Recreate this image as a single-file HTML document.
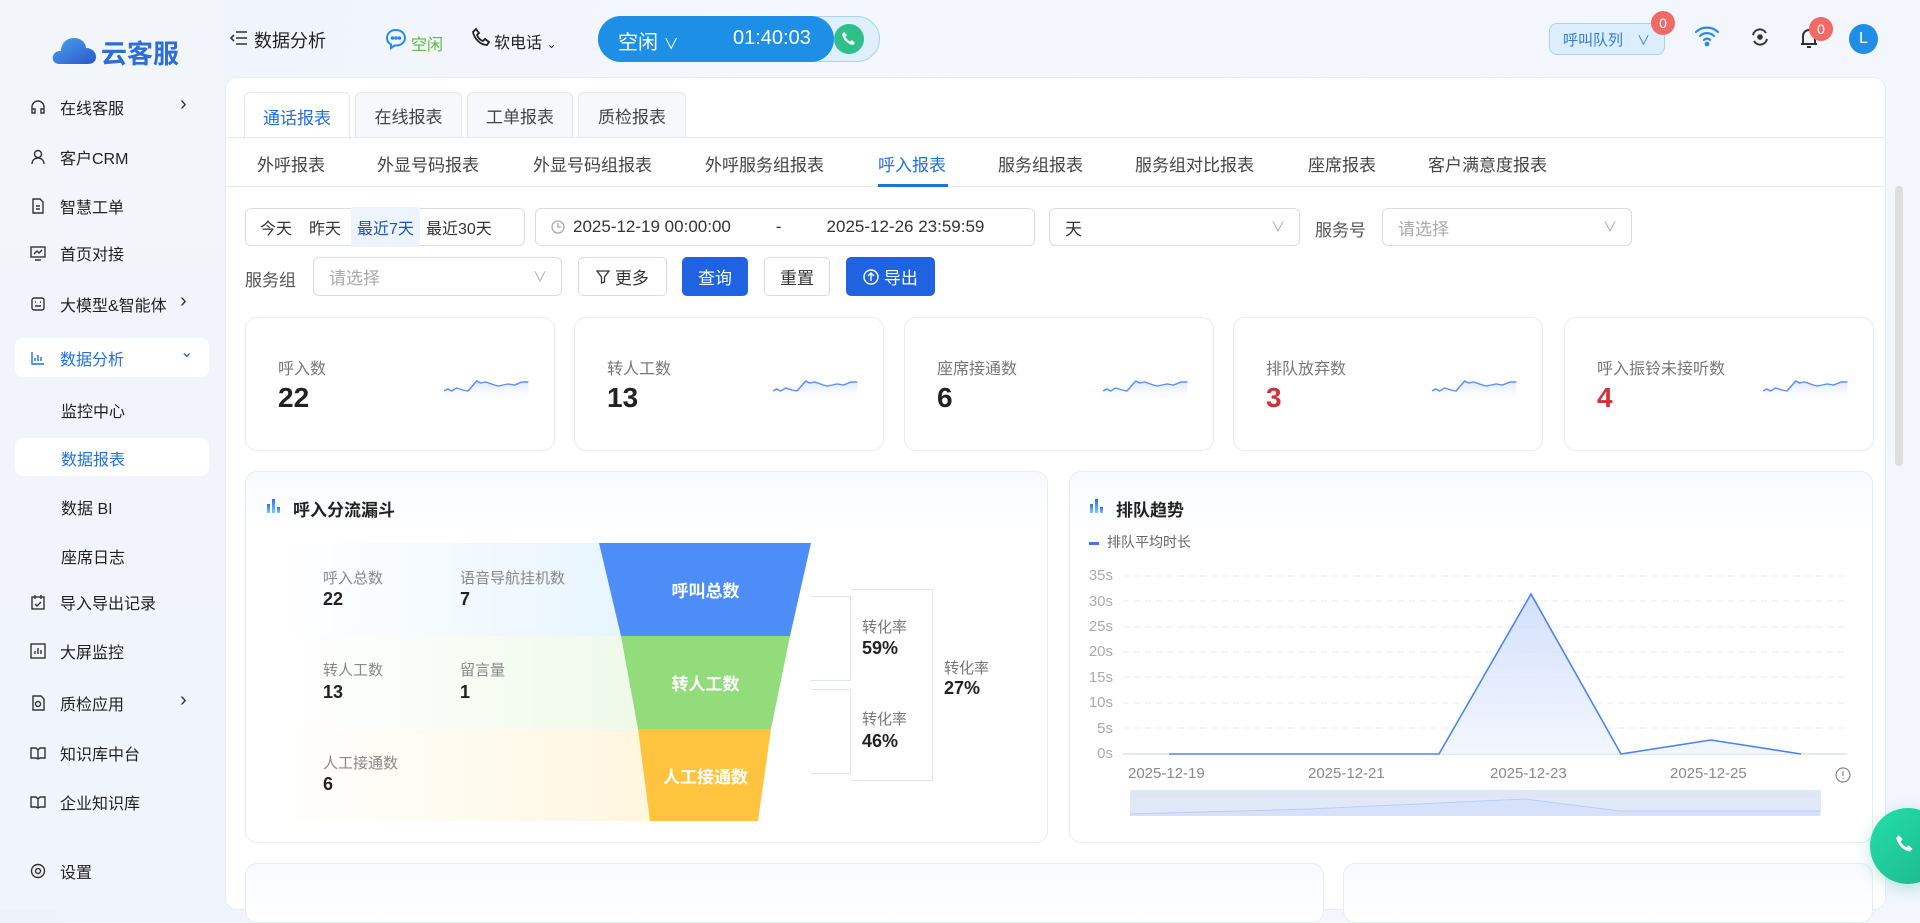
<!DOCTYPE html>
<html><head><meta charset="utf-8"><style>
*{box-sizing:border-box;margin:0;padding:0}
body{width:1920px;height:910px;overflow:hidden;position:relative;font-family:"Liberation Sans","Noto Sans CJK SC",sans-serif;color:#333;background:linear-gradient(90deg,#eef3fb 0%,#f4f7fd 40%,#f3f6fd 100%)}
.a{position:absolute}
.side{left:0;top:0;width:224px;height:910px;background:linear-gradient(180deg,#f2f6fb,#f0f4fb)}
.mi{position:absolute;left:30px;font-size:16px;color:#222;display:flex;align-items:center;height:24px}
.mi svg{width:16px;height:16px;margin-right:14px}
.mi .ar{position:absolute;left:150px;font-size:20px;color:#333;top:-2px}
.sub{position:absolute;left:61px;font-size:16px;color:#222}
.card{background:#fff;border:1px solid #e8ecf3;border-radius:12px}
.tab{position:absolute;top:92px;height:46px;border:1px solid #e6e9ef;border-bottom:none;border-radius:6px 6px 0 0;background:#f6f8fb;font-size:17px;color:#444;display:flex;align-items:center;justify-content:center}
.st{position:absolute;top:151px;font-size:17px;color:#444}
.inp{position:absolute;border:1px solid #d8dce5;border-radius:6px;background:#fff;font-size:17px;color:#333;display:flex;align-items:center}
.btn{position:absolute;top:257px;height:39px;border-radius:5px;font-size:17px;display:flex;align-items:center;justify-content:center}
.sc{position:absolute;top:317px;height:134px;width:310px}
.sc .l{position:absolute;left:32px;top:37px;font-size:16px;color:#777}
.sc .n{position:absolute;left:32px;top:64px;font-size:28px;font-weight:bold;color:#222}
.sc svg{position:absolute;left:198px;top:56px}
.fl{position:absolute;font-size:15px;color:#888}
.fn{position:absolute;font-size:18px;font-weight:bold;color:#222}
.yl{position:absolute;left:1081px;width:32px;text-align:right;font-size:15px;color:#aaa}
.xl{position:absolute;top:765px;font-size:15px;color:#888}
</style></head><body>

<div class="a side"></div>
<svg class="a" style="left:51px;top:33px" width="46" height="32" viewBox="0 0 46 32"><defs><linearGradient id="lg" x1="0" y1="0" x2="1" y2="1"><stop offset="0" stop-color="#4aa3f0"/><stop offset="1" stop-color="#2a56c8"/></linearGradient></defs><path d="M9 31 C2 31 0 25 3 21 C5 18 8 18 10 18 C10 10 16 5 23 5 C30 5 35 10 35 15 C41 15 45 19 45 24 C45 29 41 31 37 31 Z" fill="url(#lg)"/></svg>
<div class="a" style="left:101px;top:34px;font-size:26px;font-weight:bold;color:#2d6fd6">云客服</div>

<div class="mi" style="top:95px"><svg viewBox="0 0 16 16" fill="none" stroke="#333" stroke-width="1.4"><path d="M2 10V8a6 6 0 0112 0v2M2 10h3v4H2zM11 10h3v4h-3z"/></svg>在线客服<span class="ar">›</span></div>
<div class="mi" style="top:145px"><svg viewBox="0 0 16 16" fill="none" stroke="#333" stroke-width="1.4"><circle cx="8" cy="5" r="3.5"/><path d="M2 15c0-4 3-6 6-6s6 2 6 6"/></svg>客户CRM</div>
<div class="mi" style="top:194px"><svg viewBox="0 0 16 16" fill="none" stroke="#333" stroke-width="1.4"><path d="M3 1h7l3 3v11H3z M6 8h4M6 11h4"/></svg>智慧工单</div>
<div class="mi" style="top:241px"><svg viewBox="0 0 16 16" fill="none" stroke="#333" stroke-width="1.4"><rect x="1" y="2" width="14" height="10"/><path d="M4 9l3-3 2 2 3-3M5 15h6"/></svg>首页对接</div>
<div class="mi" style="top:292px"><svg viewBox="0 0 16 16" fill="none" stroke="#333" stroke-width="1.4"><rect x="2" y="2" width="12" height="12" rx="2"/><path d="M5 6h1M10 6h1M5 10h6"/></svg>大模型&amp;智能体<span class="ar">›</span></div>
<div class="a" style="left:15px;top:338px;width:194px;height:39px;background:#fff;border-radius:8px"></div>
<div class="mi" style="top:346px;color:#1f6fe5"><svg viewBox="0 0 16 16" fill="none" stroke="#1f6fe5" stroke-width="1.4"><path d="M2 2v12h12M5 11V8M8 11V5M11 11V7"/></svg>数据分析<span class="ar" style="color:#1f6fe5;font-size:16px;top:-4px">⌄</span></div>
<div class="sub" style="top:398px">监控中心</div>
<div class="a" style="left:15px;top:438px;width:194px;height:38px;background:#fff;border-radius:8px"></div>
<div class="sub" style="top:446px;color:#1f6fe5">数据报表</div>
<div class="sub" style="top:495px">数据 BI</div>
<div class="sub" style="top:544px">座席日志</div>
<div class="mi" style="top:590px"><svg viewBox="0 0 16 16" fill="none" stroke="#333" stroke-width="1.4"><rect x="2" y="3" width="12" height="12"/><path d="M5 1v4M11 1v4M5 10l2 2 4-4"/></svg>导入导出记录</div>
<div class="mi" style="top:639px"><svg viewBox="0 0 16 16" fill="none" stroke="#333" stroke-width="1.4"><rect x="1" y="1" width="14" height="14"/><path d="M5 11V8M8 11V5M11 11V7"/></svg>大屏监控</div>
<div class="mi" style="top:691px"><svg viewBox="0 0 16 16" fill="none" stroke="#333" stroke-width="1.4"><path d="M3 1h8l3 3v11H3z"/><circle cx="8" cy="9" r="2.5"/></svg>质检应用<span class="ar">›</span></div>
<div class="mi" style="top:741px"><svg viewBox="0 0 16 16" fill="none" stroke="#333" stroke-width="1.4"><path d="M1 3h5l2 2 2-2h5v10h-5l-2 1-2-1H1z M8 5v9"/></svg>知识库中台</div>
<div class="mi" style="top:790px"><svg viewBox="0 0 16 16" fill="none" stroke="#333" stroke-width="1.4"><path d="M1 3h5l2 2 2-2h5v10h-5l-2 1-2-1H1z M8 5v9"/></svg>企业知识库</div>
<div class="mi" style="top:859px"><svg viewBox="0 0 16 16" fill="none" stroke="#333" stroke-width="1.4"><circle cx="8" cy="8" r="6.5"/><circle cx="8" cy="8" r="2.5"/></svg>设置</div>

<svg class="a" style="left:230px;top:30px" width="18" height="16" viewBox="0 0 18 16" fill="none" stroke="#333" stroke-width="1.6"><path d="M6 2h11M6 8h11M6 14h11M4 5L1 8l3 3"/></svg>
<div class="a" style="left:254px;top:27px;font-size:18px;color:#222">数据分析</div>
<svg class="a" style="left:384px;top:27px" width="24" height="24" viewBox="0 0 24 24" fill="none" stroke="#2b8ae8" stroke-width="2"><path d="M12 3C6.5 3 3 6.5 3 11c0 3 1.5 5 4 6.5V21l3.5-2.5H12c5.5 0 9-3.5 9-7.5S17.5 3 12 3z"/><circle cx="8.5" cy="11" r="0.8" fill="#2b8ae8"/><circle cx="12" cy="11" r="0.8" fill="#2b8ae8"/><circle cx="15.5" cy="11" r="0.8" fill="#2b8ae8"/></svg>
<div class="a" style="left:411px;top:31px;font-size:16px;color:#5cbc3c">空闲</div>
<svg class="a" style="left:472px;top:27px" width="18" height="20" viewBox="0 0 18 20" fill="none" stroke="#222" stroke-width="1.8"><path d="M4 2l3 4-2 2c1 3 3 5 6 6l2-2 4 3-2 3C8 18 2 11 1 5z"/></svg>
<div class="a" style="left:494px;top:29px;font-size:16px;color:#222">软电话 <span style="font-size:12px">⌄</span></div>
<div class="a" style="left:598px;top:16px;width:282px;height:46px;border-radius:23px;background:#dff0fc;border:1px solid #a9d3f5"></div>
<div class="a" style="left:598px;top:16px;width:236px;height:46px;border-radius:23px;background:#1e8fe6"></div>
<div class="a" style="left:618px;top:26px;font-size:20px;color:#fff">空闲 <span style="font-size:15px">∨</span></div>
<div class="a" style="left:733px;top:27px;font-size:20px;color:#fff">01:40:03</div>
<div class="a" style="left:834px;top:24px;width:30px;height:30px;border-radius:50%;background:#2ec08a"></div>
<svg class="a" style="left:841px;top:31px" width="16" height="16" viewBox="0 0 16 16"><path d="M3 1l3 3-1.5 2c1 2 2.5 3.5 4.5 4.5L11 9l3 3-2 2C6 13 2 8 1 3z" fill="#fff"/></svg>

<div class="a" style="left:1549px;top:23px;width:116px;height:32px;border-radius:8px;background:#dceefd;border:1px solid #a9d0f3;font-size:15px;color:#2e7fd6;display:flex;align-items:center;padding-left:13px">呼叫队列 <span style="margin-left:14px;font-size:13px">∨</span></div>
<div class="a" style="left:1651px;top:11px;width:24px;height:24px;border-radius:50%;background:#f06a66;color:#fff;font-size:14px;text-align:center;line-height:24px">0</div>
<svg class="a" style="left:1694px;top:25px" width="26" height="22" viewBox="0 0 26 22" fill="none" stroke="#2b8ae8" stroke-width="2.2" stroke-linecap="round"><path d="M2 7a16 16 0 0122 0M6 11a10 10 0 0114 0M10 15a4 4 0 016 0"/><circle cx="13" cy="19" r="1.3" fill="#2b8ae8"/></svg>
<svg class="a" style="left:1750px;top:27px" width="20" height="20" viewBox="0 0 20 20" fill="none" stroke="#333" stroke-width="2"><path d="M3 8a7 7 0 0113-2M17 12a7 7 0 01-13 2"/><circle cx="10" cy="10" r="1.8" fill="#333"/></svg>
<svg class="a" style="left:1799px;top:26px" width="20" height="24" viewBox="0 0 20 24" fill="none" stroke="#333" stroke-width="2"><path d="M4 18V10a6 6 0 0112 0v8H2h16M8 21h4"/></svg>
<div class="a" style="left:1809px;top:17px;width:24px;height:24px;border-radius:50%;background:#f06a66;color:#fff;font-size:14px;text-align:center;line-height:24px">0</div>
<div class="a" style="left:1849px;top:24px;width:29px;height:30px;border-radius:50%;background:#1e8fe6;color:#fff;font-size:16px;text-align:center;line-height:30px">L</div>

<div class="a" style="left:225px;top:77px;width:1661px;height:833px;background:#fff;border-radius:12px;border:1px solid #e8edf5"></div>
<div class="tab" style="left:244px;width:106px;background:#fff;color:#1f6fe5;height:47px">通话报表</div>
<div class="tab" style="left:355px;width:107px">在线报表</div>
<div class="tab" style="left:467px;width:106px">工单报表</div>
<div class="tab" style="left:578px;width:108px">质检报表</div>
<div class="a" style="left:226px;top:137px;width:1659px;height:1px;background:#e8ebf0"></div>
<div class="a" style="left:226px;top:186px;width:1659px;height:1px;background:#e6e9ee"></div>
<div class="st" style="left:257px">外呼报表</div>
<div class="st" style="left:377px">外显号码报表</div>
<div class="st" style="left:533px">外显号码组报表</div>
<div class="st" style="left:705px">外呼服务组报表</div>
<div class="st" style="left:878px;color:#1f6fe5">呼入报表</div>
<div class="a" style="left:878px;top:184px;width:70px;height:3px;background:#1f6fe5"></div>
<div class="st" style="left:998px">服务组报表</div>
<div class="st" style="left:1135px">服务组对比报表</div>
<div class="st" style="left:1308px">座席报表</div>
<div class="st" style="left:1428px">客户满意度报表</div>
<div class="a" style="left:1895px;top:186px;width:8px;height:280px;background:#dedede;border-radius:4px"></div>

<div class="inp" style="left:245px;top:208px;width:280px;height:38px;font-size:16px">
 <span style="margin-left:14px">今天</span><span style="margin-left:17px">昨天</span><span style="margin-left:10px;background:#eef4fd;color:#1f4fc0;padding:8px 6px">最近7天</span><span style="margin-left:6px">最近30天</span></div>
<div class="inp" style="left:535px;top:208px;width:500px;height:38px"><svg style="margin-left:15px" width="14" height="14" viewBox="0 0 14 14" fill="none" stroke="#aaa" stroke-width="1.3"><circle cx="7" cy="7" r="6"/><path d="M7 3v4h3"/></svg><span style="margin-left:8px">2025-12-19 00:00:00</span><span style="margin-left:45px">-</span><span style="margin-left:45px">2025-12-26 23:59:59</span></div>
<div class="inp" style="left:1049px;top:208px;width:251px;height:38px"><span style="margin-left:15px">天</span><span style="position:absolute;right:14px;color:#aaa;font-size:14px">∨</span></div>
<div class="a" style="left:1315px;top:216px;font-size:17px;color:#555">服务号</div>
<div class="inp" style="left:1382px;top:208px;width:250px;height:38px;color:#aaa"><span style="margin-left:15px">请选择</span><span style="position:absolute;right:14px;font-size:14px">∨</span></div>
<div class="a" style="left:245px;top:266px;font-size:17px;color:#555">服务组</div>
<div class="inp" style="left:313px;top:257px;width:249px;height:39px;color:#aaa"><span style="margin-left:15px">请选择</span><span style="position:absolute;right:14px;font-size:14px">∨</span></div>
<div class="btn" style="left:578px;width:89px;border:1px solid #d8dce5;color:#333"><svg width="14" height="14" viewBox="0 0 14 14" fill="none" stroke="#333" stroke-width="1.3"><path d="M1 1h12L8.5 7v5l-3 1V7z"/></svg>&nbsp;更多</div>
<div class="btn" style="left:682px;width:66px;background:#1f63e0;color:#fff">查询</div>
<div class="btn" style="left:764px;width:66px;border:1px solid #d8dce5;color:#333">重置</div>
<div class="btn" style="left:846px;width:89px;background:#1f63e0;color:#fff"><svg width="16" height="16" viewBox="0 0 16 16" fill="none" stroke="#fff" stroke-width="1.4"><circle cx="8" cy="8" r="7"/><path d="M8 12V4M5 7l3-3 3 3"/></svg>&nbsp;导出</div>

<div class="card sc" style="left:245px"><div class="l">呼入数</div><div class="n">22</div><svg width="86" height="40" viewBox="0 0 86 40"><defs><linearGradient id="sg" x1="0" y1="0" x2="0" y2="1"><stop offset="0" stop-color="#dfe8fb"/><stop offset="1" stop-color="#fff" stop-opacity="0"/></linearGradient></defs><path d="M0 17L3 15 6 17 10 14 15 16 19 17 26 7 29 9 33 8 40 11 43 12 47 11 51 10 56 11 62 8 67 8V30H0Z" transform="scale(1.26 1)" fill="url(#sg)"/><path d="M0 17L3 15 6 17 10 14 15 16 19 17 26 7 29 9 33 8 40 11 43 12 47 11 51 10 56 11 62 8 67 8" transform="scale(1.26 1)" fill="none" stroke="#5d93f5" stroke-width="1.4"/></svg></div>
<div class="card sc" style="left:574px"><div class="l">转人工数</div><div class="n">13</div><svg width="86" height="40" viewBox="0 0 86 40"><path d="M0 17L3 15 6 17 10 14 15 16 19 17 26 7 29 9 33 8 40 11 43 12 47 11 51 10 56 11 62 8 67 8V30H0Z" transform="scale(1.26 1)" fill="url(#sg)"/><path d="M0 17L3 15 6 17 10 14 15 16 19 17 26 7 29 9 33 8 40 11 43 12 47 11 51 10 56 11 62 8 67 8" transform="scale(1.26 1)" fill="none" stroke="#5d93f5" stroke-width="1.4"/></svg></div>
<div class="card sc" style="left:904px"><div class="l">座席接通数</div><div class="n">6</div><svg width="86" height="40" viewBox="0 0 86 40"><path d="M0 17L3 15 6 17 10 14 15 16 19 17 26 7 29 9 33 8 40 11 43 12 47 11 51 10 56 11 62 8 67 8V30H0Z" transform="scale(1.26 1)" fill="url(#sg)"/><path d="M0 17L3 15 6 17 10 14 15 16 19 17 26 7 29 9 33 8 40 11 43 12 47 11 51 10 56 11 62 8 67 8" transform="scale(1.26 1)" fill="none" stroke="#5d93f5" stroke-width="1.4"/></svg></div>
<div class="card sc" style="left:1233px"><div class="l">排队放弃数</div><div class="n" style="color:#d3313a">3</div><svg width="86" height="40" viewBox="0 0 86 40"><path d="M0 17L3 15 6 17 10 14 15 16 19 17 26 7 29 9 33 8 40 11 43 12 47 11 51 10 56 11 62 8 67 8V30H0Z" transform="scale(1.26 1)" fill="url(#sg)"/><path d="M0 17L3 15 6 17 10 14 15 16 19 17 26 7 29 9 33 8 40 11 43 12 47 11 51 10 56 11 62 8 67 8" transform="scale(1.26 1)" fill="none" stroke="#5d93f5" stroke-width="1.4"/></svg></div>
<div class="card sc" style="left:1564px"><div class="l">呼入振铃未接听数</div><div class="n" style="color:#d3313a">4</div><svg width="86" height="40" viewBox="0 0 86 40"><path d="M0 17L3 15 6 17 10 14 15 16 19 17 26 7 29 9 33 8 40 11 43 12 47 11 51 10 56 11 62 8 67 8V30H0Z" transform="scale(1.26 1)" fill="url(#sg)"/><path d="M0 17L3 15 6 17 10 14 15 16 19 17 26 7 29 9 33 8 40 11 43 12 47 11 51 10 56 11 62 8 67 8" transform="scale(1.26 1)" fill="none" stroke="#5d93f5" stroke-width="1.4"/></svg></div>

<div class="card a" style="left:245px;top:471px;width:803px;height:372px;background:linear-gradient(180deg,#f8faff,#fff 60px)"></div>
<svg class="a" style="left:267px;top:498px" width="15" height="15" viewBox="0 0 15 15"><defs><linearGradient id="bi" x1="0" y1="0" x2="0" y2="1"><stop offset="0" stop-color="#2a6ff0"/><stop offset="1" stop-color="#7cc8ff"/></linearGradient></defs><rect x="0" y="6" width="3" height="9" fill="url(#bi)"/><rect x="5" y="1" width="3" height="14" fill="url(#bi)"/><rect x="10" y="9" width="3" height="6" fill="url(#bi)"/></svg>
<div class="a" style="left:293px;top:496px;font-size:17px;font-weight:bold;color:#222">呼入分流漏斗</div>
<div class="a" style="left:279px;top:543px;width:370px;height:93px;background:linear-gradient(90deg,rgba(235,245,255,0),#e6f4fe)"></div>
<div class="a" style="left:279px;top:636px;width:370px;height:93px;background:linear-gradient(90deg,rgba(240,250,240,0),#eef9e9)"></div>
<div class="a" style="left:279px;top:729px;width:370px;height:92px;background:linear-gradient(90deg,rgba(255,250,235,0),#fff6df)"></div>
<svg class="a" style="left:598px;top:542px" width="215" height="280" viewBox="0 0 215 280"><polygon points="1,1 213,1 192,94 23,94" fill="#4d8df8"/><polygon points="23,94 192,94 173,187 40,187" fill="#93dc7b"/><polygon points="40,187 173,187 160,279 52,279" fill="#fec43d"/></svg>
<div class="a" style="left:598px;top:577px;width:215px;text-align:center;font-size:17px;font-weight:bold;color:#fff">呼叫总数</div>
<div class="a" style="left:598px;top:670px;width:215px;text-align:center;font-size:17px;font-weight:bold;color:#fff">转人工数</div>
<div class="a" style="left:598px;top:763px;width:215px;text-align:center;font-size:17px;font-weight:bold;color:#fff">人工接通数</div>
<div class="fl" style="left:323px;top:567px">呼入总数</div><div class="fn" style="left:323px;top:589px">22</div>
<div class="fl" style="left:460px;top:567px">语音导航挂机数</div><div class="fn" style="left:460px;top:589px">7</div>
<div class="fl" style="left:323px;top:659px">转人工数</div><div class="fn" style="left:323px;top:682px">13</div>
<div class="fl" style="left:460px;top:659px">留言量</div><div class="fn" style="left:460px;top:682px">1</div>
<div class="fl" style="left:323px;top:752px">人工接通数</div><div class="fn" style="left:323px;top:774px">6</div>
<div class="a" style="left:811px;top:596px;width:40px;height:85px;border:1px solid #dfe3f7;border-left:none"></div>
<div class="a" style="left:811px;top:689px;width:40px;height:85px;border:1px solid #dfe3f7;border-left:none"></div>
<div class="a" style="left:851px;top:589px;width:82px;height:192px;border:1px solid #dfe3f7;border-left:none"></div>
<div class="fl" style="left:862px;top:616px;color:#777">转化率</div><div class="fn" style="left:862px;top:638px">59%</div>
<div class="fl" style="left:862px;top:708px;color:#777">转化率</div><div class="fn" style="left:862px;top:731px">46%</div>
<div class="fl" style="left:944px;top:657px;color:#777">转化率</div><div class="fn" style="left:944px;top:678px">27%</div>

<div class="card a" style="left:1069px;top:471px;width:804px;height:372px;background:linear-gradient(180deg,#f8faff,#fff 60px)"></div>
<svg class="a" style="left:1090px;top:498px" width="15" height="15" viewBox="0 0 15 15"><rect x="0" y="6" width="3" height="9" fill="url(#bi)"/><rect x="5" y="1" width="3" height="14" fill="url(#bi)"/><rect x="10" y="9" width="3" height="6" fill="url(#bi)"/></svg>
<div class="a" style="left:1116px;top:496px;font-size:17px;font-weight:bold;color:#222">排队趋势</div>
<div class="a" style="left:1089px;top:542px;width:10px;height:3px;background:#3a78f2"></div>
<div class="a" style="left:1107px;top:532px;font-size:14px;color:#666">排队平均时长</div>
<div class="yl" style="top:567px">35s</div><div class="yl" style="top:593px">30s</div><div class="yl" style="top:618px">25s</div><div class="yl" style="top:643px">20s</div><div class="yl" style="top:669px">15s</div><div class="yl" style="top:694px">10s</div><div class="yl" style="top:720px">5s</div><div class="yl" style="top:745px">0s</div>
<svg class="a" style="left:1120px;top:570px" width="730" height="190" viewBox="0 0 730 190">
<defs><linearGradient id="ag" x1="0" y1="0" x2="0" y2="1"><stop offset="0" stop-color="#c9d9fb"/><stop offset="1" stop-color="#f0f4fe"/></linearGradient></defs>
<g stroke="#e8eaee" stroke-dasharray="6 5"><path d="M3 6H727M3 31H727M3 57H727M3 82H727M3 107H727M3 133H727M3 158H727"/></g>
<path d="M3 184H727" stroke="#ccd3de"/>
<path d="M49 184L139 184 229 184 319 184 411 24 501 184 591 170 681 184Z" fill="url(#ag)" opacity=".8"/>
<path d="M49 184L139 184 229 184 319 184 411 24 501 184 591 170 681 184" fill="none" stroke="#4b83f3" stroke-width="1.6"/>
</svg>
<div class="xl" style="left:1128px">2025-12-19</div><div class="xl" style="left:1308px">2025-12-21</div><div class="xl" style="left:1490px">2025-12-23</div><div class="xl" style="left:1670px">2025-12-25</div>
<svg class="a" style="left:1835px;top:767px" width="16" height="16" viewBox="0 0 16 16" fill="none" stroke="#888" stroke-width="1.2"><circle cx="8" cy="8" r="7"/><path d="M8 4v5M8 11v1"/></svg>
<div class="a" style="left:1130px;top:790px;width:691px;height:25px;background:#dfe6f5;border-radius:2px"></div>
<svg class="a" style="left:1130px;top:798px" width="691" height="18" viewBox="0 0 691 18"><path d="M0 16L180 11 395 1 490 13 690 13V18H0Z" fill="#cbd9f8"/><path d="M0 16L180 11 395 1 490 13 690 13" fill="none" stroke="#8fb0ef"/><rect x="0" y="0" width="691" height="18" fill="#e4ecfb" opacity=".5"/></svg>

<div class="card a" style="left:245px;top:863px;width:1079px;height:60px;background:linear-gradient(180deg,#f8faff,#fff)"></div>
<div class="card a" style="left:1343px;top:863px;width:530px;height:60px;background:linear-gradient(180deg,#f8faff,#fff)"></div>

<div class="a" style="left:1870px;top:808px;width:76px;height:76px;border-radius:50%;background:linear-gradient(135deg,#22e0a8,#1fb58c);box-shadow:0 4px 16px rgba(30,180,140,.3)"></div>
<svg class="a" style="left:1895px;top:834px" width="20" height="20" viewBox="0 0 16 16"><path d="M3 1l3 3-1.5 2c1 2 2.5 3.5 4.5 4.5L11 9l3 3-2 2C6 13 2 8 1 3z" fill="#fff"/></svg>
</body></html>
